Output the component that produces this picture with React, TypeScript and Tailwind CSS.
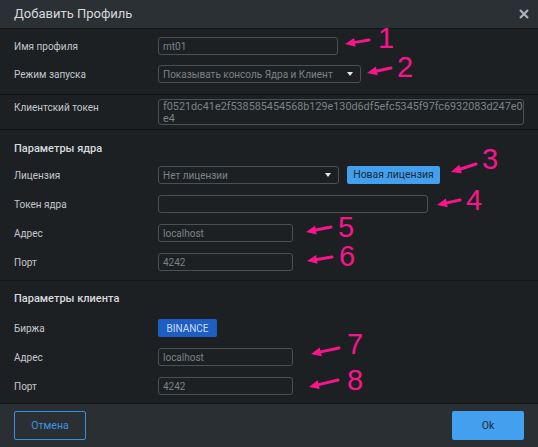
import type { ReactNode } from "react";

const font = { fontFamily: "Roboto, 'Noto Sans', sans-serif" };

type Mark = { n: string; head: [number, number]; tail: [number, number]; x: number; y: number };

const marks: Mark[] = [
  { n: "1", head: [345, 44], tail: [369, 40], x: 378, y: 24 },
  { n: "2", head: [367, 73], tail: [391, 68], x: 397, y: 53 },
  { n: "3", head: [451, 172], tail: [476, 164], x: 482, y: 145 },
  { n: "4", head: [437, 205], tail: [460, 200], x: 466, y: 186 },
  { n: "5", head: [306, 232], tail: [331, 227], x: 338, y: 213 },
  { n: "6", head: [307, 261], tail: [332, 257], x: 339, y: 242 },
  { n: "7", head: [311, 354], tail: [339, 348], x: 347, y: 330 },
  { n: "8", head: [309, 387], tail: [338, 380], x: 347, y: 366 },
];

function arrowShape(m: Mark) {
  const [hx, hy] = m.head;
  const [tx, ty] = m.tail;
  const dx = tx - hx;
  const dy = ty - hy;
  const len = Math.hypot(dx, dy);
  const ux = dx / len;
  const uy = dy / len;
  const headLen = 10;
  const half = 4.5;
  const bx = hx + ux * headLen;
  const by = hy + uy * headLen;
  const p1 = `${bx - uy * half},${by + ux * half}`;
  const p2 = `${bx + uy * half},${by - ux * half}`;
  return { line: `M${bx},${by} L${tx},${ty}`, head: `${hx},${hy} ${p1} ${p2}` };
}

function Field({ w, children, select }: { w: string; children?: ReactNode; select?: boolean }) {
  return (
    <div
      className={`${w} flex h-[18px] items-center justify-between rounded-[3px] border border-[#4b5055] pl-[4px] pr-[7px] text-[10px] text-[#7d8287]`}
    >
      <span className="truncate">{children}</span>
      {select && (
        <span className="ml-2 h-0 w-0 shrink-0 border-x-[3.5px] border-t-[4px] border-x-transparent border-t-[#e4e7ea]" />
      )}
    </div>
  );
}

function Row({ label, children, top }: { label: string; children: ReactNode; top?: boolean }) {
  return (
    <div className={`flex ${top ? "items-start" : "items-center"}`}>
      <div className={`w-[144px] shrink-0 text-[10px] text-[#c3c7cb] ${top ? "pt-[1px]" : ""}`}>{label}</div>
      {children}
    </div>
  );
}

export default function App() {
  return (
    <div className="relative h-[447px] w-[538px] overflow-hidden bg-[#1c2023]" style={font}>
      <header className="flex h-[29px] items-center justify-between border-b border-[#131618] bg-[#2b3035] pl-[14px] pr-[9px]">
        <h1 className="text-[13px] text-[#d5d9dc]">Добавить Профиль</h1>
        <svg width="10" height="10" viewBox="0 0 10 10">
          <path d="M1 1 L9 9 M9 1 L1 9" stroke="#a8b3bc" strokeWidth="2.2" />
        </svg>
      </header>

      <section className="flex flex-col gap-[10px] border-b border-[#121517] px-[14px] pb-[11px] pt-[8px]">
        <Row label="Имя профиля">
          <Field w="w-[180px]">mt01</Field>
        </Row>
        <Row label="Режим запуска">
          <Field w="w-[203px]" select>
            Показывать консоль Ядра и Клиент
          </Field>
        </Row>
      </section>

      <section className="border-b border-[#121517] px-[14px] pb-[4px] pt-[4px]">
        <Row label="Клиентский токен" top>
          <div className="h-[26px] w-[366px] whitespace-nowrap rounded-[3px] border border-[#4b5055] px-[4px] pt-[1px] text-[10.8px] leading-[11.5px] text-[#7d8287]">
            f0521dc41e2f538585454568b129e130d6df5efc5345f97fc6932083d247e0
            <br />
            e4
          </div>
        </Row>
      </section>

      <section className="flex flex-col border-b border-[#121517] px-[14px] pb-[9px] pt-[11px]">
        <h2 className="mb-[9px] h-[16px] text-[11px] font-medium leading-[16px] text-[#d8dbde]">Параметры ядра</h2>
        <div className="flex flex-col gap-[11px]">
          <Row label="Лицензия">
            <Field w="w-[181px]" select>
              Нет лицензии
            </Field>
            <button className="ml-[8px] h-[18px] w-[93px] rounded-[2px] bg-[#42a0ef] text-[10.5px] text-[#1d2a36]">
              Новая лицензия
            </button>
          </Row>
          <Row label="Токен ядра">
            <Field w="w-[270px]" />
          </Row>
          <Row label="Адрес">
            <Field w="w-[135px]">localhost</Field>
          </Row>
          <Row label="Порт">
            <Field w="w-[135px]">4242</Field>
          </Row>
        </div>
      </section>

      <section className="flex h-[122px] flex-col px-[14px] pt-[10px]">
        <h2 className="mb-[12px] h-[16px] text-[11px] font-medium leading-[16px] text-[#d8dbde]">Параметры клиента</h2>
        <div className="flex flex-col gap-[11px]">
          <Row label="Биржа">
            <span className="flex h-[18px] w-[59px] items-center justify-center rounded-[2px] bg-[#1e5ec3] text-[10px] text-[#c9dcfb]">
              BINANCE
            </span>
          </Row>
          <Row label="Адрес">
            <Field w="w-[135px]">localhost</Field>
          </Row>
          <Row label="Порт">
            <Field w="w-[135px]">4242</Field>
          </Row>
        </div>
      </section>

      <footer className="flex h-[44px] items-start justify-between border-t border-[#131618] bg-[#2a2f33] px-[14px] pt-[7px]">
        <button className="h-[29px] w-[72px] rounded-[2px] border border-[#3a8fe2] text-[10.5px] text-[#3d93e4]">
          Отмена
        </button>
        <button className="h-[29px] w-[72px] rounded-[2px] bg-[#42a0ef] text-[10.5px] text-[#1d2a36]">Ok</button>
      </footer>

      <svg className="pointer-events-none absolute left-0 top-0" width="538" height="447">
        {marks.map((m) => {
          const s = arrowShape(m);
          return (
            <g key={m.n}>
              <path d={s.line} stroke="#f7168a" strokeWidth="3" strokeLinecap="round" fill="none" />
              <polygon points={s.head} fill="#f7168a" />
            </g>
          );
        })}
      </svg>
      {marks.map((m) => (
        <span
          key={m.n}
          className="pointer-events-none absolute text-[29px] leading-[29px] text-[#f7168a]"
          style={{ left: m.x, top: m.y, fontFamily: "'Liberation Sans', Arial, sans-serif" }}
        >
          {m.n}
        </span>
      ))}
    </div>
  );
}
